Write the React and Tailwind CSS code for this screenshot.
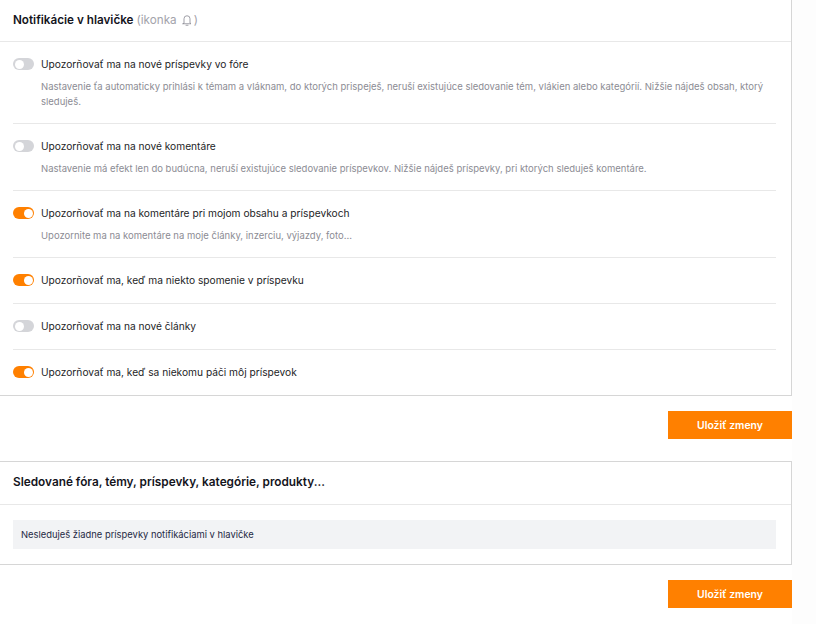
const font = "font-['Inter','Noto_Sans',sans-serif]";

function Toggle({ on }) {
  return (
    <span className={`flex h-3 w-[21px] shrink-0 items-center rounded-full px-[1.5px] ${on ? 'justify-end bg-[#ff8000]' : 'justify-start bg-[#d4d5d9]'}`}>
      <span className="h-[9px] w-[9px] rounded-full bg-white" />
    </span>
  );
}

function Row({ on, label, note, last }) {
  return (
    <div className={`${last ? '' : 'border-b border-[#e8e8e8]'} ${note ? 'pt-[15px] pb-[14px]' : 'pt-[15px] pb-[16px]'}`}>
      <div className="flex h-[14px] items-center gap-[7px]">
        <Toggle on={on} />
        <span className="text-[10.2px] leading-[14px] text-[#1d1d26]">{label}</span>
      </div>
      {note && (
        <p className="mt-[8px] pl-[28px] text-[9.5px] leading-[15px] text-[#8c8c94]">{note}</p>
      )}
    </div>
  );
}

function SaveButton() {
  return (
    <div className="flex justify-end">
      <button className="h-[28px] w-[124px] bg-[#ff8000] pt-[1px] text-[10.4px] font-semibold text-white">Uložiť zmeny</button>
    </div>
  );
}

export default function App() {
  return (
    <div className={`${font} h-[624px] w-[816px] overflow-hidden bg-[#fdfdfd]`}>
      <div className="h-full w-[792px] bg-white">
        <section className="border-r border-b border-[#d6d6d6]">
          <header className="flex h-[42px] items-center gap-[3px] border-b border-[#e8e8e8] pl-[13px]">
            <h2 className="text-[11.7px] font-semibold text-[#14141c]">Notifikácie v hlavičke</h2>
            <span className="flex items-center text-[11.7px] text-[#a3a3ab]">
              (ikonka
              <svg className="mr-[1px] ml-[4px] h-[12px] w-[12px]" viewBox="0 0 24 24" fill="none" stroke="#8f8f97" strokeWidth="1.7" strokeLinecap="round" strokeLinejoin="round">
                <path d="M6 18V9.5a6 6 0 0 1 12 0V18l2 1.5H4z" />
                <path d="M10 22.5h4" />
              </svg>
              )
            </span>
          </header>
          <div className="pr-[15px] pl-[13px]">
            <Row
              label="Upozorňovať ma na nové príspevky vo fóre"
              note="Nastavenie ťa automaticky prihlási k témam a vláknam, do ktorých prispeješ, neruší existujúce sledovanie tém, vlákien alebo kategórií. Nižšie nájdeš obsah, ktorý sleduješ."
            />
            <Row
              label="Upozorňovať ma na nové komentáre"
              note="Nastavenie má efekt len do budúcna, neruší existujúce sledovanie príspevkov. Nižšie nájdeš príspevky, pri ktorých sleduješ komentáre."
            />
            <Row
              on
              label="Upozorňovať ma na komentáre pri mojom obsahu a príspevkoch"
              note="Upozornite ma na komentáre na moje články, inzerciu, výjazdy, foto..."
            />
            <Row on label="Upozorňovať ma, keď ma niekto spomenie v príspevku" />
            <Row label="Upozorňovať ma na nové články" />
            <Row on last label="Upozorňovať ma, keď sa niekomu páči môj príspevok" />
          </div>
        </section>

        <div className="mt-[15px] mb-[22px]"><SaveButton /></div>

        <section className="border-t border-r border-b border-[#d6d6d6]">
          <header className="flex h-[43px] items-center border-b border-[#e8e8e8] pl-[13px]">
            <h2 className="text-[11.8px] font-semibold text-[#14141c]">Sledované fóra, témy, príspevky, kategórie, produkty...</h2>
          </header>
          <div className="px-[15px] pt-[15px] pb-[15px] pl-[13px]">
            <div className="flex h-[29px] items-center bg-[#f2f3f5] pt-[1px] pl-[8px] text-[9.4px] text-[#1f2a44]">
              Nesleduješ žiadne príspevky notifikáciami v hlavičke
            </div>
          </div>
        </section>

        <div className="mt-[15px]"><SaveButton /></div>
      </div>
    </div>
  );
}
